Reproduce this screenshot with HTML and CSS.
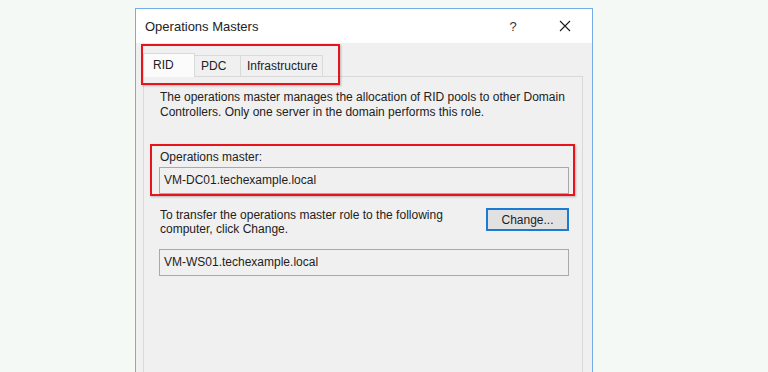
FILE: index.html
```html
<!DOCTYPE html>
<html lang="en">
<head>
    <meta charset="UTF-8">
    <meta name="viewport" content="width=device-width, initial-scale=1.0">
    <title>Operations Masters</title>
    <link rel="stylesheet" href="styles.css">
</head>
<body>
    <div class="dialog">
        <div class="titlebar">
            <span class="title">Operations Masters</span>
            <span class="help">?</span>
            <span class="close">
                <svg width="12" height="12" viewBox="0 0 12 12">
                    <path d="M1 1 L11 11 M11 1 L1 11" stroke="#1a1a1a" stroke-width="1.1" fill="none"/>
                </svg>
            </span>
        </div>

        <div class="content">
            <div class="tabs">
                <div class="tab active rid">RID</div>
                <div class="tab pdc">PDC</div>
                <div class="tab infra">Infrastructure</div>
            </div>

            <div class="panel">
                <p class="desc">The operations master manages the allocation of RID pools to other Domain Controllers. Only one server in the domain performs this role.</p>

                <div class="label">Operations master:</div>
                <div class="field">VM-DC01.techexample.local</div>

                <div class="transfer">
                    <p class="transferText">To transfer the operations master role to the following computer, click Change.</p>
                    <button class="changeButton">Change...</button>
                </div>

                <div class="field">VM-WS01.techexample.local</div>
            </div>
        </div>

        <!-- red highlight boxes drawn over the dialog -->
        <div class="highlight tabsHighlight"></div>
        <div class="highlight masterHighlight"></div>
    </div>
</body>
</html>
```

FILE: styles.css
```css
body {
    margin: 0;
    background-color: #f4f9f6;
    font-family: "Liberation Sans", Arial, sans-serif;
    font-size: 12px;
    color: #1e1e1e;
    overflow: hidden;
}

.dialog {
    position: relative;
    box-sizing: border-box;
    width: 458px;
    height: 380px;
    margin: 8px 0 0 135px;
    border: 1px solid #74aee8;
    background-color: #f0f0f0;
}

.titlebar {
    display: flex;
    align-items: center;
    height: 34px;
    padding-left: 9px;
    background-color: #fff;
}

.title {
    flex: 1;
    font-size: 13px;
    color: #222;
}

.help {
    width: 20px;
    margin-right: 32px;
    text-align: center;
    font-size: 13px;
    color: #333;
}

.close {
    display: flex;
    width: 20px;
    margin-right: 17px;
    justify-content: center;
}

.content {
    padding: 10px 9px 0 7px;
}

.tabs {
    display: flex;
    align-items: flex-end;
    height: 23px;
}

.tab {
    box-sizing: border-box;
    height: 21px;
    padding-left: 6px;
    line-height: 20px;
    border: 1px solid #d9d9d9;
    border-bottom: none;
    background-color: #f0f0f0;
    color: #222;
}

.tab.active {
    position: relative;
    z-index: 1;
    height: 24px;
    margin-bottom: -1px;
    padding-left: 9px;
    line-height: 22px;
    background-color: #fbfbfb;
}

.rid {
    width: 52px;
}

.pdc {
    width: 46px;
    border-left: none;
}

.infra {
    width: 82px;
    border-left: none;
}

.panel {
    box-sizing: border-box;
    height: 300px;
    padding: 13px 13px 0 16px;
    border: 1px solid #d9d9d9;
    background-color: #f0f0f0;
}

.desc {
    margin: 0;
    line-height: 15px;
    color: #222;
}

.label {
    margin-top: 29px;
    line-height: 16px;
    color: #222;
}

.field {
    box-sizing: border-box;
    height: 27px;
    margin: 2px 0 0 -1px;
    padding-left: 4px;
    line-height: 25px;
    border: 1px solid #a9a9a9;
    background-color: #f0f0f0;
    color: #1e1e1e;
}

.transfer {
    display: flex;
    justify-content: space-between;
    align-items: flex-start;
    margin: 11px 0 13px;
}

.transferText {
    width: 300px;
    margin: 3px 0 0;
    line-height: 14px;
    color: #222;
}

.changeButton {
    box-sizing: border-box;
    width: 83px;
    height: 23px;
    margin-top: 3px;
    padding: 0;
    border: 2px solid #1a7ad4;
    background-color: #e1e1e1;
    font-family: inherit;
    font-size: 12px;
    color: #1e1e1e;
}

.highlight {
    position: absolute;
    box-sizing: border-box;
    border: 2px solid #e8141b;
    box-shadow: 1px 1px 2px rgba(0, 0, 0, 0.25);
}

.tabsHighlight {
    left: 5px;
    top: 35px;
    width: 199px;
    height: 41px;
}

.masterHighlight {
    left: 14px;
    top: 135px;
    width: 425px;
    height: 52px;
}
```
